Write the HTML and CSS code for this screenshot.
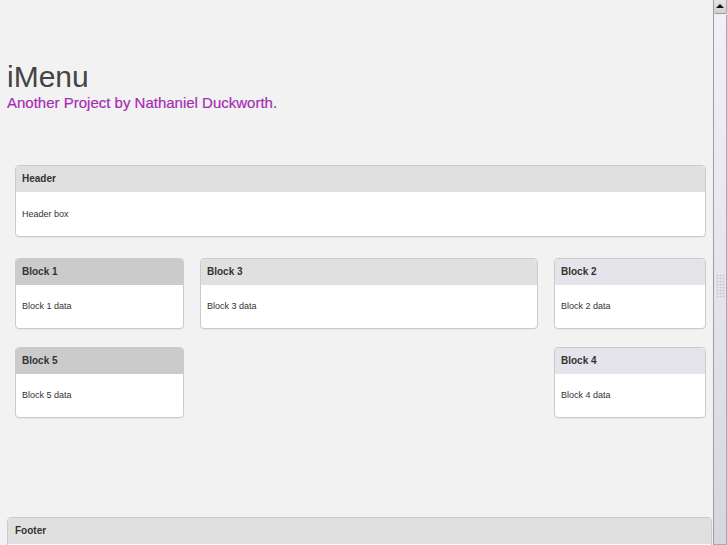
FILE: index.html
```html
<!DOCTYPE html>
<html lang="en">
<head>
<meta charset="utf-8">
<title>iMenu</title>
<link rel="stylesheet" href="styles.css">
</head>
<body>
  <div class="page">
    <h1 class="site-title">iMenu</h1>
    <p class="site-sub">Another Project by Nathaniel Duckworth.</p>

    <main class="main">
      <section class="box">
        <div class="box-head">Header</div>
        <div class="box-body">Header box</div>
      </section>

      <div class="blocks">
        <section class="box box-dark">
          <div class="box-head">Block 1</div>
          <div class="box-body">Block 1 data</div>
        </section>
        <section class="box">
          <div class="box-head">Block 3</div>
          <div class="box-body">Block 3 data</div>
        </section>
        <section class="box box-blue">
          <div class="box-head">Block 2</div>
          <div class="box-body">Block 2 data</div>
        </section>
        <section class="box box-dark col-1">
          <div class="box-head">Block 5</div>
          <div class="box-body">Block 5 data</div>
        </section>
        <section class="box box-blue col-3">
          <div class="box-head">Block 4</div>
          <div class="box-body">Block 4 data</div>
        </section>
      </div>
    </main>

    <footer class="box footer">
      <div class="box-head">Footer</div>
      <div class="box-body"></div>
    </footer>
  </div>

  <div class="scrollbar" aria-hidden="true">
    <div class="sb-button"><span class="sb-arrow"></span></div>
    <div class="sb-track">
      <div class="sb-thumb"><span class="sb-grip"></span></div>
    </div>
  </div>
</body>
</html>
```

FILE: styles.css
```css
html,
body {
  height: 100%;
}

body {
  margin: 0;
  display: flex;
  overflow: hidden;
  background: #f2f2f2;
  font-family: "Liberation Sans", Arial, sans-serif;
  color: #333;
}

.page {
  flex: 1;
  min-width: 0;
  padding-left: 7px;
  overflow: hidden;
}

.site-title {
  margin: 60px 0 0;
  font-size: 30px;
  line-height: 34px;
  font-weight: normal;
  color: #444;
}

.site-sub {
  margin: 0;
  font-size: 15px;
  line-height: 17px;
  color: #a62cb4;
  -webkit-text-stroke: 0.2px #a62cb4;
}

.main {
  margin: 54px 7px 0 8px;
}

.box {
  background: #fff;
  border: 1px solid #cbcbcb;
  border-radius: 4px;
  overflow: hidden;
  box-shadow: 0 1px 0 rgba(0, 0, 0, 0.04);
}

.box-head {
  height: 26px;
  line-height: 26px;
  padding: 0 6px;
  background: #e0e0e0;
  font-size: 10px;
  font-weight: bold;
  color: #333;
}

.box-body {
  height: 44px;
  padding: 0 6px;
  line-height: 44px;
  font-size: 9px;
  color: #333;
}

.box-dark .box-head {
  background: #cbcbcb;
}

.box-blue .box-head {
  background: #e4e4ea;
}

.blocks {
  margin-top: 21px;
  display: grid;
  grid-template-columns: 169px 338px 152px;
  justify-content: space-between;
  row-gap: 18px;
}

.blocks .box-body {
  height: 43px;
  line-height: 43px;
}

.col-1 {
  grid-column: 1;
}

.col-3 {
  grid-column: 3;
}

.footer {
  margin: 99px 1px 0 0;
  border-radius: 4px 4px 0 0;
}

.footer .box-head {
  padding: 0 7px;
}

/* scrollbar */
.scrollbar {
  width: 14px;
  flex: none;
  display: flex;
  flex-direction: column;
  background: #ebebf0;
  border-left: 1px solid #9c9ca2;
  box-sizing: border-box;
}

.sb-button {
  height: 14px;
  flex: none;
  display: flex;
  align-items: center;
  justify-content: center;
  background: linear-gradient(#e6e6ea, #cfcfd4);
  border-bottom: 1px solid #9c9ca2;
  border-right: 1px solid #a8a8b0;
  border-radius: 0 0 2px 2px;
  box-sizing: border-box;
}

.sb-arrow {
  width: 0;
  height: 0;
  border-left: 4px solid transparent;
  border-right: 4px solid transparent;
  border-bottom: 4px solid #111;
  margin-top: -1px;
}

.sb-track {
  flex: 1;
  display: flex;
  flex-direction: column;
  padding-top: 1px;
}

.sb-thumb {
  flex: 1;
  display: flex;
  align-items: center;
  justify-content: center;
  background: linear-gradient(#f0f0f6, #e6e6ec 45%, #d6d6de);
  border-right: 1px solid #a8a8b0;
  border-bottom: 1px solid #a8a8b0;
}

.sb-grip {
  width: 9px;
  height: 24px;
  margin-top: 12px;
  background-image: radial-gradient(circle, #c4c4cc 0.8px, transparent 1.1px);
  background-size: 3px 3px;
}
```
